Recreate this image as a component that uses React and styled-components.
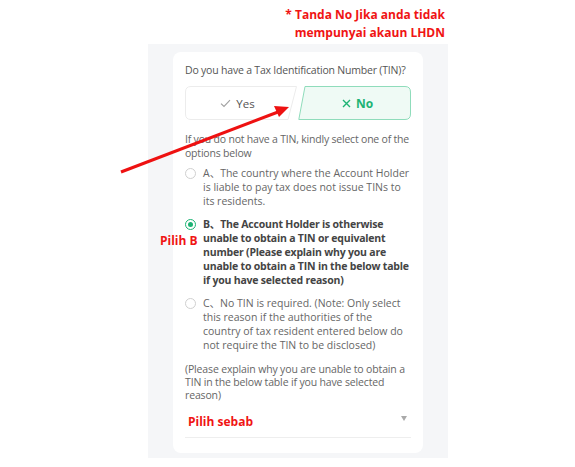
import React from "react";
import styled, { createGlobalStyle } from "styled-components";

const Global = createGlobalStyle`
  html, body { margin: 0; padding: 0; background: #ffffff; }
  body { font-family: "Open Sans", "Noto Sans CJK SC", sans-serif; }
  * { box-sizing: border-box; }
`;

const Page = styled.div`
  position: relative;
  width: 575px;
  height: 467px;
  overflow: hidden;
  background: #ffffff;
`;

const Note = styled.div`
  height: 44px;
  padding: 6px 130px 0 0;
  text-align: right;
  color: #f01414;
  font-family: "Open Sans", sans-serif;
  font-weight: 700;
  font-size: 12px;
  line-height: 18px;
`;

const Panel = styled.div`
  position: relative;
  margin-left: 148px;
  width: 300px;
  height: 414px;
  padding: 8px 25px 5px;
  background: #f5f6f8;
`;

const Card = styled.div`
  height: 100%;
  background: #ffffff;
  border-radius: 8px;
  padding: 11px 12px 0;
  color: #666;
  font-size: 10.5px;
`;

const Question = styled.div`
  line-height: 14px;
  color: #555;
  white-space: nowrap;
  letter-spacing: -0.2px;
`;

const ButtonRow = styled.div`
  display: grid;
  grid-template-columns: 113px 113px;
  height: 34px;
  margin-top: 9px;
`;

const Choice = styled.div`
  position: relative;
  display: flex;
  align-items: center;
  justify-content: center;
  padding-left: ${(p) => (p.$active ? "6px" : "0")};
  padding-right: ${(p) => (p.$active ? "0" : "8px")};
  color: ${(p) => (p.$active ? "#1db374" : "#555")};
  font-weight: ${(p) => (p.$active ? 700 : 400)};
  font-size: ${(p) => (p.$active ? "12px" : "11.5px")};
`;

const ChoiceShape = styled.svg`
  position: absolute;
  inset: 0;
  width: 100%;
  height: 100%;
`;

const ChoiceLabel = styled.span`
  position: relative;
  display: inline-flex;
  align-items: center;
  gap: 5px;
`;

const Hint = styled.div`
  margin-top: 13px;
  line-height: 13.5px;
  color: #666;
  letter-spacing: -0.2px;
`;

const OptionList = styled.div`
  display: flex;
  flex-direction: column;
  gap: 9px;
  margin-top: 6px;
`;

const Option = styled.div`
  display: grid;
  grid-template-columns: 11px 1fr;
  column-gap: 7px;
  line-height: 14px;
  color: ${(p) => (p.$checked ? "#444" : "#666")};
  font-weight: ${(p) => (p.$checked ? 700 : 400)};
  letter-spacing: ${(p) => (p.$checked ? "-0.2px" : "0")};
`;

const Radio = styled.span`
  position: relative;
  width: 11px;
  height: 11px;
  margin-top: 1.5px;
  border-radius: 50%;
  border: 1px solid ${(p) => (p.$checked ? "#1db374" : "#d0d0d0")};
  background: #fff;
  &::after {
    content: "";
    display: ${(p) => (p.$checked ? "block" : "none")};
    position: absolute;
    left: 2px;
    top: 2px;
    width: 5px;
    height: 5px;
    border-radius: 50%;
    background: #1db374;
  }
`;

const Explain = styled.div`
  margin-top: 11px;
  line-height: 13px;
  color: #666;
  letter-spacing: -0.15px;
`;

const Select = styled.div`
  display: flex;
  align-items: center;
  justify-content: space-between;
  height: 35px;
  margin-top: 1px;
  padding: 2px 4px 0 3px;
  border-bottom: 1px solid #eeeeee;
`;

const SelectText = styled.span`
  color: #f01414;
  font-weight: 700;
  font-size: 12px;
`;

const Caret = styled.span`
  width: 0;
  height: 0;
  margin-bottom: 6px;
  border-left: 3.5px solid transparent;
  border-right: 3.5px solid transparent;
  border-top: 5px solid #aaa;
`;

const Annotation = styled.div`
  position: absolute;
  left: 12px;
  top: 189px;
  color: #f01414;
  font-weight: 700;
  font-size: 12px;
  line-height: 16px;
`;

const ArrowLayer = styled.svg`
  position: absolute;
  left: 0;
  top: 0;
  width: 575px;
  height: 467px;
  pointer-events: none;
`;

function CheckIcon() {
  return (
    <svg width="11" height="9" viewBox="0 0 11 9">
      <path d="M1 4.6 L4 7.5 L10 1.2" fill="none" stroke="#a0a0a0" strokeWidth="1.1" />
    </svg>
  );
}

function CrossIcon() {
  return (
    <svg width="9" height="9" viewBox="0 0 9 9">
      <path d="M1 1 L8 8 M8 1 L1 8" fill="none" stroke="#1db374" strokeWidth="1.4" />
    </svg>
  );
}

export default function App() {
  return (
    <Page>
      <Global />
      <Note>
        * Tanda No Jika anda tidak
        <br />
        mempunyai akaun LHDN
      </Note>
      <Panel>
        <Card>
          <Question>Do you have a Tax Identification Number (TIN)?</Question>
          <ButtonRow>
            <Choice>
              <ChoiceShape viewBox="0 0 113 34" preserveAspectRatio="none">
                <path
                  d="M6 0.5 H111.5 L103 33.5 H6 Q0.5 33.5 0.5 28 V6 Q0.5 0.5 6 0.5 Z"
                  fill="#fff"
                  stroke="#ececec"
                />
              </ChoiceShape>
              <ChoiceLabel>
                <CheckIcon />
                Yes
              </ChoiceLabel>
            </Choice>
            <Choice $active>
              <ChoiceShape viewBox="0 0 113 34" preserveAspectRatio="none">
                <path
                  d="M7 0.5 H107 Q112.5 0.5 112.5 6 V28 Q112.5 33.5 107 33.5 H0.8 Z"
                  fill="#effaf5"
                  stroke="#8fdcbb"
                />
              </ChoiceShape>
              <ChoiceLabel>
                <CrossIcon />
                No
              </ChoiceLabel>
            </Choice>
          </ButtonRow>
          <Hint>If you do not have a TIN, kindly select one of the options below</Hint>
          <OptionList>
            <Option>
              <Radio />
              <span>A、The country where the Account Holder is liable to pay tax does not issue TINs to its residents.</span>
            </Option>
            <Option $checked>
              <Radio $checked />
              <span>
                B、The Account Holder is otherwise unable to obtain a TIN or equivalent number (Please explain why you are unable to obtain a TIN in the below table if you have selected reason)
              </span>
            </Option>
            <Option>
              <Radio />
              <span>
                C、No TIN is required. (Note: Only select this reason if the authorities of the country of tax resident entered below do not require the TIN to be disclosed)
              </span>
            </Option>
          </OptionList>
          <Explain>
            (Please explain why you are unable to obtain a TIN in the below table if you have selected reason)
          </Explain>
          <Select>
            <SelectText>Pilih sebab</SelectText>
            <Caret />
          </Select>
        </Card>
        <Annotation>Pilih B</Annotation>
      </Panel>
      <ArrowLayer viewBox="0 0 575 467">
        <line x1="121" y1="172" x2="278" y2="112" stroke="#ee1111" strokeWidth="3" />
        <polygon points="289,107 274,106 279,117" fill="#ee1111" />
      </ArrowLayer>
    </Page>
  );
}
